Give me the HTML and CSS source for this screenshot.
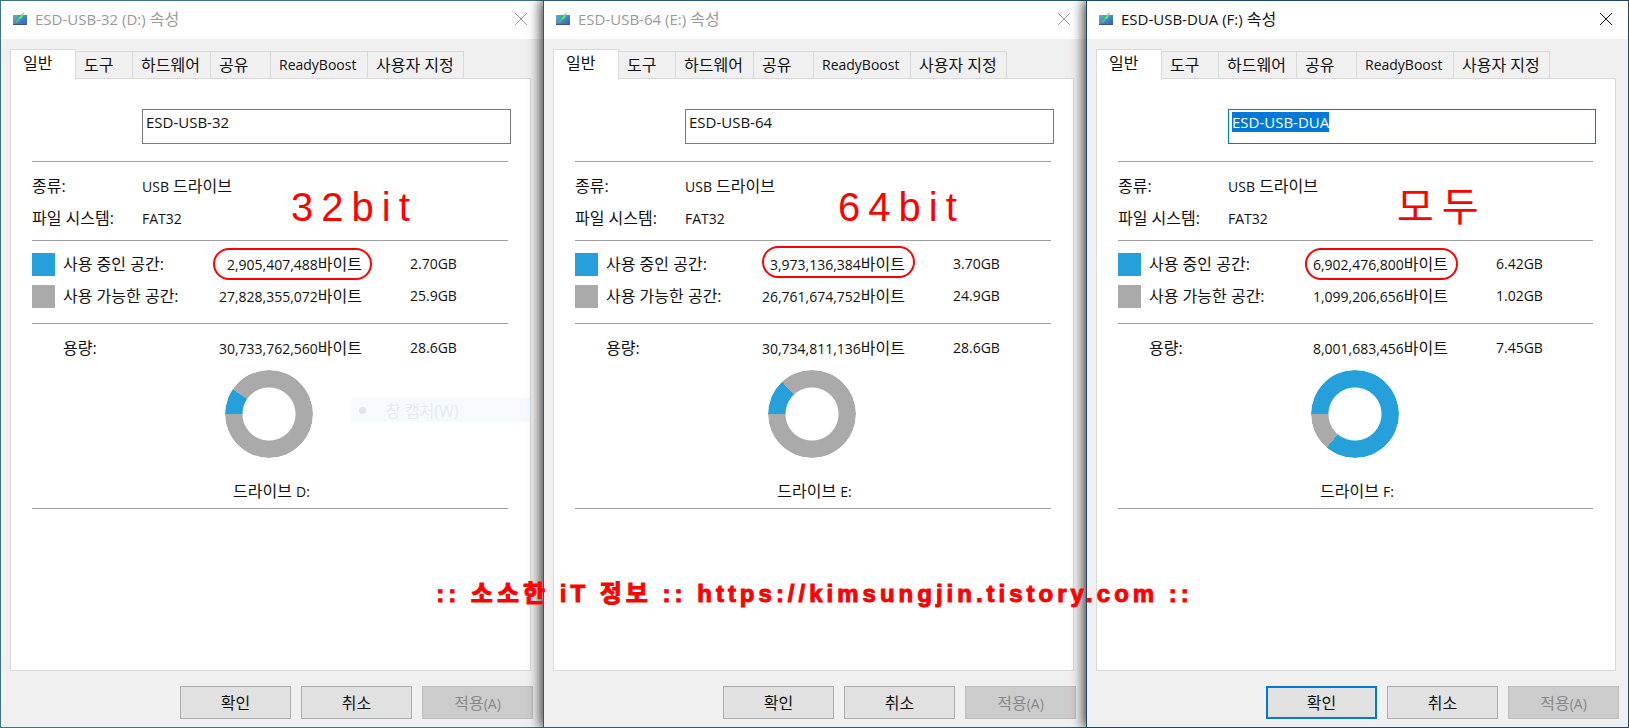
FILE: index.html
```
<!DOCTYPE html>
<html lang="ko">
<head>
    <meta charset="UTF-8">
    <meta name="viewport" content="width=device-width, initial-scale=1.0">
    <title>ESD-USB 속성</title>
    <link rel="stylesheet" href="styles.css">
</head>
<body>
    <svg class="hidden">
        <linearGradient id="drive-blue" x1="0" y1="0" x2="1" y2="1">
            <stop offset="0" stop-color="#6fa8dc"/>
            <stop offset="1" stop-color="#2a62b4"/>
        </linearGradient>
        <symbol id="drive-icon" viewBox="0 0 16 16">
            <path d="M1 4h14v10H1z" fill="url(#drive-blue)"/>
            <path d="M1 13h14v1H1z" fill="#3b5580"/>
            <path d="M4 6l2 3 3-2 3-5-5 3z" fill="#2fc653"/>
            <path d="M6 9l3-5 3-3-2 6z" fill="#6fe37b"/>
            <path d="M3 11l3-3 2 1-3 3z" fill="#4fb4a0"/>
        </symbol>
        <symbol id="close-icon" viewBox="0 0 14 14">
            <path d="M1 1l12 12M13 1L1 13" fill="none" stroke="currentColor"/>
        </symbol>
    </svg>

    <main class="desktop">
        <section class="window">
            <header class="titlebar">
                <svg class="drive"><use href="#drive-icon"/></svg>
                <h1><span class="en">ESD-USB-32 (D:)</span> 속성</h1>
                <button class="close" aria-label="닫기"><svg><use href="#close-icon"/></svg></button>
            </header>
            <nav class="tabs">
                <button class="tab active">일반</button>
                <button class="tab">도구</button>
                <button class="tab">하드웨어</button>
                <button class="tab">공유</button>
                <button class="tab num">ReadyBoost</button>
                <button class="tab">사용자 지정</button>
            </nav>
            <div class="panel">
                <input class="label-box" type="text" value="ESD-USB-32" aria-label="볼륨 이름">
                <dl class="info">
                    <dt>종류:</dt><dd><span class="num">USB</span> 드라이브</dd>
                    <dt>파일 시스템:</dt><dd><span class="num">FAT32</span></dd>
                </dl>
                <table class="space">
                    <tr><td><i class="swatch used"></i></td><th>사용 중인 공간:</th><td class="bytes"><span class="mark wide"><span class="num">2,905,407,488</span>바이트</span></td><td class="size">2.70GB</td></tr>
                    <tr><td><i class="swatch"></i></td><th>사용 가능한 공간:</th><td class="bytes"><span class="num">27,828,355,072</span>바이트</td><td class="size">25.9GB</td></tr>
                    <tr class="total"><td></td><th>용량:</th><td class="bytes"><span class="num">30,733,762,560</span>바이트</td><td class="size">28.6GB</td></tr>
                </table>
                <div class="donut" style="--used: 34deg"></div>
                <p class="drive-name">드라이브 <span class="num">D:</span></p>
                <p class="note">32bit</p>
                <div class="ghost-menu"><i></i>창 캡처(W)</div>
            </div>
            <footer class="buttons">
                <button>확인</button>
                <button>취소</button>
                <button disabled>적용<span class="num">(A)</span></button>
            </footer>
        </section>

        <section class="window second">
            <header class="titlebar">
                <svg class="drive"><use href="#drive-icon"/></svg>
                <h1><span class="en">ESD-USB-64 (E:)</span> 속성</h1>
                <button class="close" aria-label="닫기"><svg><use href="#close-icon"/></svg></button>
            </header>
            <nav class="tabs">
                <button class="tab active">일반</button>
                <button class="tab">도구</button>
                <button class="tab">하드웨어</button>
                <button class="tab">공유</button>
                <button class="tab num">ReadyBoost</button>
                <button class="tab">사용자 지정</button>
            </nav>
            <div class="panel">
                <input class="label-box" type="text" value="ESD-USB-64" aria-label="볼륨 이름">
                <dl class="info">
                    <dt>종류:</dt><dd><span class="num">USB</span> 드라이브</dd>
                    <dt>파일 시스템:</dt><dd><span class="num">FAT32</span></dd>
                </dl>
                <table class="space">
                    <tr><td><i class="swatch used"></i></td><th>사용 중인 공간:</th><td class="bytes"><span class="mark"><span class="num">3,973,136,384</span>바이트</span></td><td class="size">3.70GB</td></tr>
                    <tr><td><i class="swatch"></i></td><th>사용 가능한 공간:</th><td class="bytes"><span class="num">26,761,674,752</span>바이트</td><td class="size">24.9GB</td></tr>
                    <tr class="total"><td></td><th>용량:</th><td class="bytes"><span class="num">30,734,811,136</span>바이트</td><td class="size">28.6GB</td></tr>
                </table>
                <div class="donut" style="--used: 47deg"></div>
                <p class="drive-name">드라이브 <span class="num">E:</span></p>
                <p class="note">64bit</p>
            </div>
            <footer class="buttons">
                <button>확인</button>
                <button>취소</button>
                <button disabled>적용<span class="num">(A)</span></button>
            </footer>
        </section>

        <section class="window focused">
            <header class="titlebar">
                <svg class="drive"><use href="#drive-icon"/></svg>
                <h1><span class="en">ESD-USB-DUA (F:)</span> 속성</h1>
                <button class="close" aria-label="닫기"><svg><use href="#close-icon"/></svg></button>
            </header>
            <nav class="tabs">
                <button class="tab active">일반</button>
                <button class="tab">도구</button>
                <button class="tab">하드웨어</button>
                <button class="tab">공유</button>
                <button class="tab num">ReadyBoost</button>
                <button class="tab">사용자 지정</button>
            </nav>
            <div class="panel">
                <input class="label-box" id="volume" type="text" value="ESD-USB-DUA" aria-label="볼륨 이름">
                <dl class="info">
                    <dt>종류:</dt><dd><span class="num">USB</span> 드라이브</dd>
                    <dt>파일 시스템:</dt><dd><span class="num">FAT32</span></dd>
                </dl>
                <table class="space">
                    <tr><td><i class="swatch used"></i></td><th>사용 중인 공간:</th><td class="bytes"><span class="mark"><span class="num">6,902,476,800</span>바이트</span></td><td class="size">6.42GB</td></tr>
                    <tr><td><i class="swatch"></i></td><th>사용 가능한 공간:</th><td class="bytes"><span class="num">1,099,206,656</span>바이트</td><td class="size">1.02GB</td></tr>
                    <tr class="total"><td></td><th>용량:</th><td class="bytes"><span class="num">8,001,683,456</span>바이트</td><td class="size">7.45GB</td></tr>
                </table>
                <div class="donut" style="--used: 310deg"></div>
                <p class="drive-name">드라이브 <span class="num">F:</span></p>
                <p class="note">모두</p>
            </div>
            <footer class="buttons">
                <button class="default">확인</button>
                <button>취소</button>
                <button disabled>적용<span class="num">(A)</span></button>
            </footer>
        </section>

        <p class="watermark">:: 소소한 iT 정보 :: https://kimsungjin.tistory.com ::</p>
    </main>
    <script>
        const volume = document.getElementById("volume");
        volume.focus();
        volume.select();
    </script>
</body>
</html>
```
FILE: styles.css
```
* {
    box-sizing: border-box;
}
body {
    margin: 0;
    font-family: "Open Sans", "Noto Sans CJK KR", sans-serif;
    font-size: 16px;
    color: #111;
}
button,
input {
    font: inherit;
    color: inherit;
}
h1,
p,
dl,
dd {
    margin: 0;
}
.hidden {
    position: absolute;
    width: 0;
    height: 0;
}
.en {
    font-size: 15px;
}
.num {
    font-size: 14px;
    line-height: 1;
}
.desktop {
    position: relative;
    display: grid;
    grid-template-columns: repeat(3, 1fr);
    min-height: 100vh;
    overflow: hidden;
}

/* window frame */
.window {
    position: relative;
    display: flex;
    flex-direction: column;
    background: #f0f0f0;
    border: 1px solid #3f7384;
    border-right: none;
}
.window.second {
    border-color: #2c5a72;
    box-shadow: -2px 0 12px rgba(0, 0, 0, 0.8);
}
.window.focused {
    border: 1px solid #1f4562;
    box-shadow: -2px 0 12px rgba(0, 0, 0, 0.8);
}
.titlebar {
    display: flex;
    align-items: center;
    height: 38px;
    padding: 0 15px 2px 11px;
    background: #fff;
    color: #999;
}
.focused .titlebar {
    color: #111;
}
.titlebar h1 {
    flex: 1;
    margin-left: 7px;
    font-size: 16px;
    font-weight: 400;
    line-height: 20px;
}
.drive {
    width: 16px;
    height: 16px;
}
.close {
    width: 14px;
    height: 14px;
    padding: 0;
    border: none;
    background: none;
}
.close svg {
    display: block;
    width: 14px;
    height: 14px;
}

/* tabs */
.tabs {
    display: grid;
    grid-template-columns: 66px 57px 78px 60px 97px 96px;
    align-items: end;
    height: 40px;
    margin-left: 9px;
}
.tab {
    height: 28px;
    padding: 0 0 0 8px;
    border: 1px solid #d9d9d9;
    border-left: none;
    background: #f0f0f0;
    text-align: left;
    white-space: nowrap;
    line-height: 26px;
}
.tab.num {
    font-size: 14px;
}
.tab.active {
    position: relative;
    z-index: 1;
    height: 31px;
    margin-bottom: -1px;
    padding: 0 0 4px 12px;
    border-left: 1px solid #d9d9d9;
    border-bottom: none;
    background: #fff;
}

/* property page */
.panel {
    position: relative;
    flex: 1;
    margin: -1px 12px 0 9px;
    padding: 30px 22px 20px 21px;
    border: 1px solid #d9d9d9;
    background: #fff;
}
.label-box {
    display: block;
    width: calc(100% - 107px);
    height: 35px;
    margin-left: 110px;
    padding: 0 4px 9px 3px;
    border: 1px solid #7a7a7a;
    border-radius: 0;
    outline: none;
    background: #fff;
    font-size: 15px;
}
.focused .label-box {
    border-color: #0078d7;
}
.label-box::selection {
    background: #0078d7;
    color: #fff;
}
.info {
    display: grid;
    grid-template-columns: 110px 1fr;
    margin-top: 17px;
    padding: 8px 0 6px;
    border: solid #a0a0a0;
    border-width: 1px 0;
    line-height: 32px;
}
.space {
    width: 100%;
    margin-top: 7px;
    border-collapse: collapse;
    table-layout: fixed;
}
.space td,
.space th {
    height: 32px;
    padding: 0;
    line-height: 32px;
    font-weight: 400;
    text-align: left;
    white-space: nowrap;
}
.space td:first-child {
    width: 31px;
}
.space th {
    width: 140px;
}
.space .bytes {
    width: 159px;
    text-align: right;
}
.space .size {
    padding-left: 48px;
    font-size: 14px;
}
.space .total td,
.space .total th {
    height: 52px;
    padding-top: 20px;
    background: linear-gradient(#a0a0a0, #a0a0a0) 0 11px / 100% 1px no-repeat;
}
.swatch {
    display: block;
    width: 23px;
    height: 23px;
    background: #aaa;
}
.swatch.used {
    background: #26a0da;
}
.donut {
    width: 88px;
    height: 88px;
    margin: 6px auto 0 193px;
    border-radius: 50%;
    background: conic-gradient(from 270deg, #26a0da var(--used), #aaa 0);
    mask: radial-gradient(circle, transparent 26px, #000 27px);
}
.drive-name {
    margin-top: 16px;
    padding-left: 3px;
    border-bottom: 1px solid #a0a0a0;
    text-align: center;
    line-height: 34px;
}
.buttons {
    display: flex;
    justify-content: flex-end;
    gap: 10px;
    padding: 15px 10px 8px;
}
.focused .buttons {
    padding-right: 9px;
}
.buttons button {
    width: 111px;
    height: 33px;
    padding: 0 0 2px;
    border: 1px solid #adadad;
    background: #e1e1e1;
}
.buttons button:disabled {
    border-color: #bfbfbf;
    background: #ccc;
    color: #888;
}
.buttons .default {
    border: 2px solid #0078d7;
}

/* red annotations */
.note {
    position: absolute;
    top: 105px;
    left: 280px;
    color: #f00;
    font-family: "Liberation Sans", "Noto Sans CJK KR", sans-serif;
    font-size: 40px;
    line-height: 46px;
    letter-spacing: 8px;
}
.second .note {
    left: 284px;
}
.focused .note {
    left: 300px;
}
.mark {
    position: relative;
}
.mark::after {
    content: "";
    position: absolute;
    inset: -5px -10px -5px -8px;
    border: 2px solid #f00;
    border-radius: 16px;
}
.mark.wide::after {
    left: -14px;
}
.second .mark::after {
    top: -7px;
    bottom: -3px;
}
.watermark {
    position: absolute;
    top: 578px;
    left: 0;
    right: 0;
    color: #f00;
    font-family: "Liberation Sans", "Noto Sans CJK KR", sans-serif;
    font-size: 24px;
    font-weight: 700;
    line-height: 32px;
    letter-spacing: 4px;
    text-align: center;
    -webkit-text-stroke: 1px #f00;
}

/* fading capture menu left on screen */
.ghost-menu {
    position: absolute;
    top: 319px;
    left: 340px;
    right: 0;
    display: flex;
    align-items: center;
    gap: 20px;
    height: 24px;
    padding-left: 8px;
    background: #f5fafe;
    color: #e6ebf0;
}
.ghost-menu i {
    width: 7px;
    height: 7px;
    border-radius: 50%;
    background: #e3e4ea;
}
```
